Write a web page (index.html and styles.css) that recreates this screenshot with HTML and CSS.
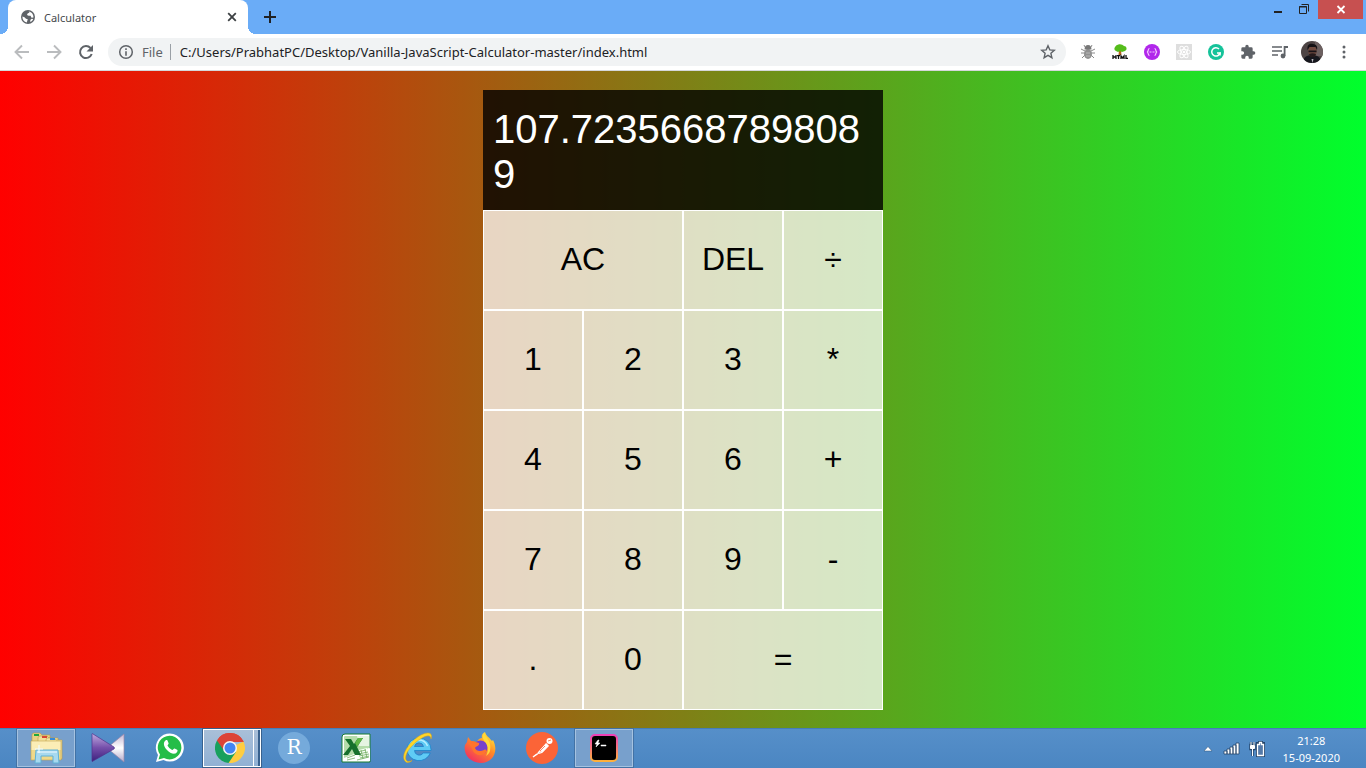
FILE: index.html
```html
<!DOCTYPE html>
<html lang="en">
<head>
<meta charset="utf-8">
<title>Calculator</title>
<link rel="stylesheet" href="styles.css">
</head>
<body>
<header class="tab-strip">
  <div class="tab">
    <svg class="tab-icon" width="14" height="14" viewBox="0 0 14 14"><circle cx="7" cy="7" r="7" fill="#5f6368"/><path d="M1.400 6.500 3.500 7.200 5 8.800 6.800 9.200 6.300 10.800 5.800 12.500C3 12 1.300 9.500 1.400 6.500ZM7.600 1.400 8.500 2.500 6.600 3.500 6 5 7.600 5.800 9.600 5.800 10.500 7.700 12.400 7.600C12.800 4.500 10.600 1.700 7.600 1.400ZM12.200 9 10.600 8.800 9.300 10 9.300 12C10.700 11.500 11.800 10.300 12.200 9Z" fill="#fff"/></svg>
    <span class="tab-title">Calculator</span>
    <button class="tab-close" aria-label="Close tab"><svg width="10" height="10" viewBox="0 0 10 10"><path d="M1.200 1.200l7.600 7.600M8.800 1.200L1.200 8.800" stroke="#3c4043" stroke-width="1.800"/></svg></button>
  </div>
  <button class="new-tab" aria-label="New tab"><svg width="12" height="12" viewBox="0 0 12 12"><path d="M6 0v12M0 6h12" stroke="#202124" stroke-width="2"/></svg></button>
  <div class="window-buttons">
    <button aria-label="Minimize"><svg width="26" height="19" viewBox="0 0 26 19"><path d="M8 11h8v2H8z" fill="#222"/></svg></button>
    <button aria-label="Restore"><svg width="26" height="19" viewBox="0 0 26 19"><path d="M7.500 6.500h7v7h-7zM7 7h8M9.500 4.500h7v7" fill="none" stroke="#222"/></svg></button>
    <button class="window-close" aria-label="Close"><svg width="45" height="19" viewBox="0 0 45 19"><path d="M19.500 6l7 7M26.500 6l-7 7" stroke="#fff" stroke-width="1.800"/></svg></button>
  </div>
</header>

<nav class="toolbar">
  <button class="tool" aria-label="Back"><svg width="16" height="16" viewBox="0 0 16 16"><path d="M15 8H2M8 1.500L1.500 8 8 14.500" fill="none" stroke="#babcbe" stroke-width="1.900"/></svg></button>
  <button class="tool" aria-label="Forward"><svg width="16" height="16" viewBox="0 0 16 16"><path d="M1 8h13M8 1.500L14.500 8 8 14.500" fill="none" stroke="#babcbe" stroke-width="1.900"/></svg></button>
  <button class="tool" aria-label="Reload"><svg width="16" height="16" viewBox="0 0 16 16"><path d="M13.700 10A6 6 0 1 1 12.500 4" fill="none" stroke="#5f6368" stroke-width="2"/><path d="M15 1v6.500H8.500z" fill="#5f6368"/></svg></button>
  <div class="omnibox">
    <svg width="16" height="16" viewBox="0 0 16 16"><circle cx="8" cy="8" r="6.300" fill="none" stroke="#5f6368" stroke-width="1.500"/><path d="M7.200 4.300h1.600V6H7.200zM7.200 7.200h1.600v4.500H7.200z" fill="#5f6368"/></svg>
    <span class="scheme">File</span>
    <input class="address" type="text" aria-label="Address" value="C:/Users/PrabhatPC/Desktop/Vanilla-JavaScript-Calculator-master/index.html">
    <button class="star" aria-label="Bookmark this page"><svg width="16" height="16" viewBox="0 0 16 16"><path d="M8 1.800l1.800 4.100 4.500.4-3.400 3 1 4.400L8 11.400l-3.900 2.300 1-4.400-3.400-3 4.500-.4z" fill="none" stroke="#5f6368" stroke-width="1.400"/></svg></button>
  </div>
  <button class="tool" aria-label="Bug reporter"><svg width="16" height="16" viewBox="0 0 16 16"><path d="M1 5l4 2M15 5l-4 2M1 9h14M2 14l3-3M14 14l-3-3M5 3L4 1M11 3l1-2" stroke="#8a8a8a" fill="none"/><ellipse cx="8" cy="10" rx="4" ry="5" fill="#929292"/><path d="M4.500 5.500a3.500 4.500 0 0 1 7 0z" fill="#777"/><path d="M6 9h4M6 12h4" stroke="#b9b9b9"/></svg></button>
  <button class="tool" aria-label="HTML tree"><svg width="16" height="18" viewBox="0 0 16 18"><path d="M7 7h2l.5 5h-3z" fill="#b5651d"/><path d="M4 8A2.800 2.800 0 0 1 3 4a5 4 0 0 1 9-1 2.600 2.600 0 0 1 1 5l-3 1-2-1-2 1z" fill="#55bd1b"/><path d="M1 12v4M4 12v4M1 14h3M5 12.600h3M6.500 12v4M9 16v-3l1.500 2 1.500-2v3M14 12v3.400h2" fill="none" stroke="#111" stroke-width="1.300"/></svg></button>
  <button class="tool" aria-label="Code helper"><svg width="16" height="16" viewBox="0 0 16 16"><circle cx="8" cy="8" r="8" fill="#b127eb"/><path d="M5.500 4.500c-2 0-.5 3-2.500 3.500 2 .5.500 3.500 2.500 3.500M10.500 4.500c2 0 .5 3 2.500 3.500-2 .5-.5 3.500-2.500 3.500M5.500 8h2M8.500 8h2" stroke="#f4c9ff" stroke-width="1.200" fill="none"/></svg></button>
  <button class="tool" aria-label="React tools"><svg width="16" height="16" viewBox="0 0 16 16"><path d="M0 0h16v16H0z" fill="#dedede"/><g fill="none" stroke="#fff"><ellipse cx="8" cy="8" rx="6.500" ry="2.500"/><ellipse cx="8" cy="8" rx="6.500" ry="2.500" transform="rotate(60 8 8)"/><ellipse cx="8" cy="8" rx="6.500" ry="2.500" transform="rotate(120 8 8)"/></g><circle cx="8" cy="8" r="1.300" fill="#fff"/></svg></button>
  <button class="tool" aria-label="Grammar check"><svg width="16" height="16" viewBox="0 0 16 16"><circle cx="8" cy="8" r="8" fill="#15c39a"/><path d="M11 5a4.200 4.200 0 1 0 1 4H9" fill="none" stroke="#fff" stroke-width="1.500"/><path d="M12.200 8.200v3.400" stroke="#fff" stroke-width="1.200"/></svg></button>
  <button class="tool" aria-label="Extensions"><svg width="16" height="16" viewBox="0 0 24 24"><path d="M20.500 11H19V7a2 2 0 0 0-2-2h-4V3.500a2.500 2.500 0 0 0-5 0V5H4a2 2 0 0 0-2 2v3.800h1.500a2.700 2.700 0 0 1 0 5.400H2V20a2 2 0 0 0 2 2h3.800v-1.500a2.700 2.700 0 0 1 5.400 0V22H17a2 2 0 0 0 2-2v-4h1.500a2.500 2.500 0 0 0 0-5z" fill="#5f6368"/></svg></button>
  <button class="tool" aria-label="Media controls"><svg width="16" height="14" viewBox="0 0 16 14"><path d="M0 2h10M0 6h10M0 10h6" stroke="#5f6368" stroke-width="1.700"/><path d="M12.600 11V2H16" fill="none" stroke="#5f6368" stroke-width="1.800"/><circle cx="11" cy="11" r="2.400" fill="#5f6368"/></svg></button>
  <button class="tool" aria-label="Profile"><svg width="22" height="22" viewBox="0 0 22 22"><defs><clipPath id="face"><circle cx="11" cy="11" r="11"/></clipPath></defs><g clip-path="url(#face)"><path d="M0 0h22v22H0z" fill="#4d4444"/><path d="M14 0h8v15h-8z" fill="#6c6060"/><path d="M2 22c0-6 4-8 9-8s9 2 9 8z" fill="#16171d"/><ellipse cx="11.500" cy="10" rx="4.300" ry="6" fill="#714b40"/><path d="M6.500 9C6 3 9 2.500 12 3s5 2 4 6l-1.500-3h-6z" fill="#151215"/><path d="M7.500 9.500h8v1.700h-8z" fill="#171317"/><path d="M8 13c2-1 5-1 7 0l-1 3h-5z" fill="#251a1b"/><path d="M10.500 18l1 4 1-4z" fill="#b7b4bb"/></g></svg></button>
  <button class="tool" aria-label="Menu"><svg width="4" height="14" viewBox="0 0 4 14"><g fill="#5f6368"><circle cx="2" cy="2" r="1.500"/><circle cx="2" cy="7" r="1.500"/><circle cx="2" cy="12" r="1.500"/></g></svg></button>
</nav>

<main class="page">
  <div class="calculator">
    <output class="display">107.72356687898089</output>
    <button class="span-two">AC</button><button>DEL</button><button>÷</button>
    <button>1</button><button>2</button><button>3</button><button>*</button>
    <button>4</button><button>5</button><button>6</button><button>+</button>
    <button>7</button><button>8</button><button>9</button><button>-</button>
    <button>.</button><button>0</button><button class="span-two">=</button>
  </div>
</main>

<footer class="taskbar">
  <button class="task open" aria-label="File Explorer"><svg width="34" height="32" viewBox="0 0 34 32"><path d="M3 3q0-2 2-2h6l2 2h8v20H3z" fill="#ead283" stroke="#b99b49" stroke-width=".6"/><path d="M5 2h5v2H5z" fill="#20a83d"/><path d="M9 6q0-2 2-2h7l2 2h9v18H9z" fill="#f2de98" stroke="#b99b49" stroke-width=".6"/><path d="M13 4h5v2h-5z" fill="#d84735"/><path d="M17 8q0-2 2-2h6l2 2h6v19H17z" fill="#f5e4a1" stroke="#b99b49" stroke-width=".6"/><path d="M21 6h5v2h-5z" fill="#378bd9"/><path d="M2 9h30v19H2z" fill="#efd98a"/><path d="M2 9h30v9H2z" fill="#fbedb6"/><path d="M2 9h30v19H2z" fill="none" stroke="#c4a552" stroke-width=".6"/><path d="M6 31l1-13h22l1 13h-6v-7H12v7z" fill="#a7d9ef" stroke="#5eb0d5"/><path d="M8 20h20M10 13v8M6 17h8" stroke="#effaff" stroke-width="1.200"/></svg></button>
  <button class="task" aria-label="KMPlayer"><svg width="34" height="30" viewBox="0 0 34 30"><defs><linearGradient id="violet" x2="0" y2="1"><stop stop-color="#c0abe0"/><stop offset=".5" stop-color="#7650ab"/><stop offset="1" stop-color="#3c207d"/></linearGradient><linearGradient id="silver" x2="0" y2="1"><stop stop-color="#c5b8d4"/><stop offset=".5" stop-color="#fff"/><stop offset="1" stop-color="#b5a9ca"/></linearGradient></defs><path d="M33 1v28L16 15z" fill="url(#silver)" stroke="#9b86a8" stroke-width=".7"/><path d="M1 1v27q0 1 1 0l21-12q1-1 0-2L2 1q-1-1-1 0z" fill="url(#violet)" stroke="#52328c" stroke-width=".7"/></svg></button>
  <button class="task" aria-label="WhatsApp"><svg width="30" height="30" viewBox="0 0 30 30"><path d="M1 29l2-7A14 14 0 1 1 8.500 27z" fill="#fff"/><path d="M3.500 26.500l1.500-5A11.800 11.800 0 1 1 9 25z" fill="#25bd48"/><path d="M10.500 7.500c1-.8 2-.2 2.200.6l.9 2.200c.3.800-1.300 1.800-1 2.400a9 9 0 0 0 4.500 4.200c.8.300 1.700-1.600 2.500-1.300l2.500 1.200c1.200.7-.2 3.300-1.700 3.700-5 1.300-12-5.500-11.500-10 .1-1.300.8-2.300 1.600-3z" fill="#fff"/></svg></button>
  <button class="task active" aria-label="Chrome"><svg width="30" height="30" viewBox="0 0 30 30"><path d="M15 15L2 7.500A15 15 0 0 1 28 7.500L29 9H15z" fill="#dc4337"/><path d="M15 15L28.400 8.500A15 15 0 0 1 13.500 30z" fill="#ffcd41"/><path d="M15 15L2 7.500A15 15 0 0 0 13.500 30l7.500-11z" fill="#18a05d"/><path d="M15 8.500h13.400A15 15 0 0 0 2 7.500L9.300 18z" fill="#dc4337"/><circle cx="15" cy="15" r="7" fill="#f5f5f5"/><circle cx="15" cy="15" r="5.500" fill="#4285f4"/></svg></button>
  <button class="task" aria-label="RStudio"><span class="r-logo">R</span></button>
  <button class="task" aria-label="Excel"><svg width="30" height="30" viewBox="0 0 30 30"><path d="M4 1h25v28H1V4q0-3 3-3z" fill="#fff" stroke="#197d31"/><path d="M3 4q0-1 1-1h24v12L3 25z" fill="#b5dcaa"/><path d="M16 3h12v10H18z" fill="#e6f4e2"/><path d="M3 27L29 15v13H3z" fill="#fff"/><path d="M14 18l12-3 3 8-10 5z" fill="#f8fff6"/><g stroke="#72ad62" stroke-width=".8"><path d="M16 19l9-2M17 21l10-2M18 23l10-2M19 25l9-2M16 27l12-3M6 25l8-3M6 27l8-2M20 17l2 9M24 16l2 9"/></g><path d="M4 6h6l3 5 4-6h5l-6 9 4 8h-6l-3-6-4 6H2l7-9z" fill="#16702c"/><path d="M17 5h5l-6 9-2-4z" fill="#60b847"/></svg></button>
  <button class="task" aria-label="Internet Explorer"><svg width="32" height="32" viewBox="0 0 32 32"><path d="M5 17.500a12 11.500 0 0 1 24 0v1H12.500a4.800 4.800 0 0 0 8.800 2.500h7A12 11.500 0 0 1 5 17.500zM12.500 14.500h9a4.600 4.600 0 0 0-9 0z" fill="#5fcbf5" fill-rule="evenodd" stroke="#1c83cb" stroke-width=".8"/><path d="M7.500 15a9.500 9.500 0 0 1 18-1" fill="none" stroke="#b5ecff" stroke-width="1.500"/><path d="M3 29C-2 23 8 9 19 3c8-4 12-2 10 4 0-4-4-4-9-1C9 12 0 25 5 29c1 1 3 .5 5-.5-2 2-5 3-7 .5z" fill="#ffd629" stroke="#e5a710" stroke-width=".5"/></svg></button>
  <button class="task" aria-label="Firefox"><svg width="32" height="32" viewBox="0 0 32 32"><defs><linearGradient id="flame" x1=".85" x2=".2" y2=".95"><stop stop-color="#fff03b"/><stop offset=".45" stop-color="#ff8a27"/><stop offset="1" stop-color="#f22e61"/></linearGradient></defs><path d="M3 10l1-5 3 4 6 1c1-3 3-4 5-4-1-3 1-5 3-6 1 4 4 5 6 8l1 1 1-1c6 11 0 23-12 23S-1 21 1 13z" fill="url(#flame)"/><circle cx="16.500" cy="15.500" r="7" fill="#7642cb"/><path d="M4 11l4-2 7 2c1 3-3 3-4 5 1 3 5 4 9 2 2-1 3 0 2 2-4 6-13 3-14-4z" fill="#ff742d"/><path d="M20 1c2 5 8 8 6 18-1 3-3 4-4 5 3-6 2-9 0-13-2-3-5-5-2-10z" fill="#ffd93b"/></svg></button>
  <button class="task" aria-label="Postman"><svg width="32" height="32" viewBox="0 0 32 32"><circle cx="16" cy="16" r="16" fill="#fb6437"/><circle cx="23.500" cy="9" r="3" fill="#fff"/><path d="M20 11l3 3-7 7-3 1 1-4zM13 20l-5 4 3-1 5-4z" fill="#fff"/><path d="M21 12l-9 9M22 13l-6 7M11 22l-4 3" stroke="#fff" stroke-width="1.500"/><path d="M19 14l-5 5M22 9l3-1" stroke="#fb6437" stroke-width=".8"/></svg></button>
  <button class="task open" aria-label="Terminal"><svg width="28" height="28" viewBox="0 0 28 28"><defs><linearGradient id="neon" x2="0" y2="1"><stop stop-color="#ef3eb6"/><stop offset="1" stop-color="#ffb13b"/></linearGradient></defs><rect x="1" y="1" width="26" height="26" rx="4" fill="#000" stroke="url(#neon)" stroke-width="2"/><path d="M8 6l-3 4h2l-1 3 4-4H8l1-3zM11 11h5v1h-5z" fill="#fff" stroke="#fff" stroke-width=".5"/></svg></button>
  <div class="tray">
    <svg width="12" height="6" viewBox="0 0 12 6"><path d="M6 .5l4 4.500h-8z" fill="#fff" stroke="#2d5075" stroke-width=".5"/></svg>
    <svg width="17" height="13" viewBox="0 0 17 13"><path d="M1 9h3v3H1zM4 7h3v5H4zM7 5h3v7H7zM10 3h3v9h-3zM13 1h3v11h-3z" fill="#fff" stroke="#244469" stroke-width=".8"/></svg>
    <svg width="16" height="16" viewBox="0 0 16 16"><path d="M1.500 4h4v4h-4zM2 1v3M5 1v3M3.500 8v7" fill="#fff" stroke="#244469" stroke-width="2.400"/><path d="M1.500 4.500h4v3h-4zM2 1v3M5 1v3M3.500 8v7" fill="#fff" stroke="#fff"/><path d="M8.500 2.500h2v-2h2v2h2v13h-6z" fill="none" stroke="#244469" stroke-width="3"/><path d="M8.500 3.500h2v-2h2v2h2v11h-6z" fill="#5379a8" stroke="#fff" stroke-width="1.300"/></svg>
  </div>
  <div class="clock"><time>21:28</time><time>15-09-2020</time></div>
</footer>
</body>
</html>
```

FILE: styles.css
```css
* { box-sizing: border-box; }

body {
  margin: 0;
  min-height: 100vh;
  display: flex;
  flex-direction: column;
  font-family: "Noto Sans", "Open Sans", sans-serif;
}

button {
  margin: 0;
  padding: 0;
  border: 0;
  background: none;
}

svg { display: block; flex: none; }

/* Browser tabs and window buttons */
.tab-strip {
  display: flex;
  height: 34px;
  padding: 0 3px 0 8px;
  background: #6aacf7;
}

.tab {
  position: relative;
  display: flex;
  align-items: center;
  width: 240px;
  padding: 0 10px 0 13px;
  border-radius: 8px 8px 0 0;
  background: #fff;
}

.tab::before,
.tab::after {
  content: "";
  position: absolute;
  bottom: 0;
  width: 8px;
  height: 8px;
}

.tab::before {
  right: 100%;
  background: radial-gradient(circle at 0 0, transparent 8px, #fff 8px);
}

.tab::after {
  left: 100%;
  background: radial-gradient(circle at 100% 0, transparent 8px, #fff 8px);
}

.tab-title {
  flex: 1;
  margin-left: 9px;
  font-size: 11px;
  color: #45494d;
}

.tab-close { padding: 1px; }

.new-tab { padding: 0 16px; }

.window-buttons {
  display: flex;
  align-items: flex-start;
  margin-left: auto;
}

.window-close { background: #c75050; }

/* Address bar and extensions */
.toolbar {
  display: flex;
  align-items: center;
  height: 37px;
  padding: 0 6px;
  border-bottom: 1px solid #d5d7da;
  background: #fff;
}

.tool {
  display: flex;
  align-items: center;
  justify-content: center;
  width: 32px;
  height: 28px;
}

.omnibox {
  display: flex;
  flex: 1;
  align-items: center;
  height: 28px;
  margin: 0 6px;
  padding: 0 10px;
  border-radius: 14px;
  background: #f1f3f4;
  font-size: 13px;
}

.scheme {
  margin-left: 8px;
  padding-right: 7px;
  border-right: 1px solid #9aa0a6;
  line-height: 16px;
  color: #5f6368;
}

.address {
  flex: 1;
  min-width: 0;
  padding: 0 0 0 9px;
  border: 0;
  background: none;
  font: inherit;
  color: #202124;
}

/* Calculator */
.page {
  flex: 1;
  padding: 19px 0 18px;
  background: linear-gradient(to right, #f00, #00ff2c);
}

.calculator {
  display: grid;
  grid-template-columns: repeat(4, 100px);
  grid-template-rows: minmax(120px, auto) repeat(5, 100px);
  justify-content: center;
  font-family: "Liberation Sans", Arial, sans-serif;
}

.display {
  grid-column: 1 / -1;
  padding: 17px 10px 13px;
  background: rgba(0, 0, 0, .8);
  color: #fff;
  font-size: 40px;
  line-height: 45px;
  overflow-wrap: anywhere;
}

.calculator button {
  padding-bottom: 2px;
  border: 1px solid #fff;
  background: rgba(255, 255, 255, .75);
  color: #000;
  font: 32px "Liberation Sans", Arial, sans-serif;
}

.calculator .span-two { grid-column: span 2; }

/* Desktop taskbar */
.taskbar {
  display: flex;
  gap: 4px;
  height: 40px;
  padding: 0 26px 0 17px;
  border-top: 1px solid #457db8;
  background: linear-gradient(#568fc9, #4b86c2);
}

.task {
  position: relative;
  display: flex;
  align-items: center;
  justify-content: center;
  width: 58px;
  height: 38px;
}

.open {
  border: 1px solid #a5c2e0;
  outline: 1px solid #4272a5;
  background: #78a0cc;
}

.active {
  padding-right: 4px;
  border: 1px solid #fff;
  outline: 1px solid #38618e;
  background: linear-gradient(#a9bfd8, #91b1d4);
}

/* Edge of the second window stacked behind the active one */
.active::after {
  content: "";
  position: absolute;
  top: 0;
  right: 0;
  bottom: 0;
  width: 4px;
  border-right: 2px solid #38618e;
  border-left: 1px solid #fff;
}

.r-logo {
  width: 32px;
  height: 32px;
  border-radius: 50%;
  background: #75aadb;
  color: #fff;
  font: 20px/31px "DejaVu Serif", serif;
}

.tray {
  display: flex;
  align-items: center;
  gap: 9px;
  margin-left: auto;
}

.clock {
  display: flex;
  flex-direction: column;
  justify-content: center;
  margin-left: 14px;
  color: #fff;
  font-size: 11px;
  line-height: 17px;
  text-align: center;
}
```
